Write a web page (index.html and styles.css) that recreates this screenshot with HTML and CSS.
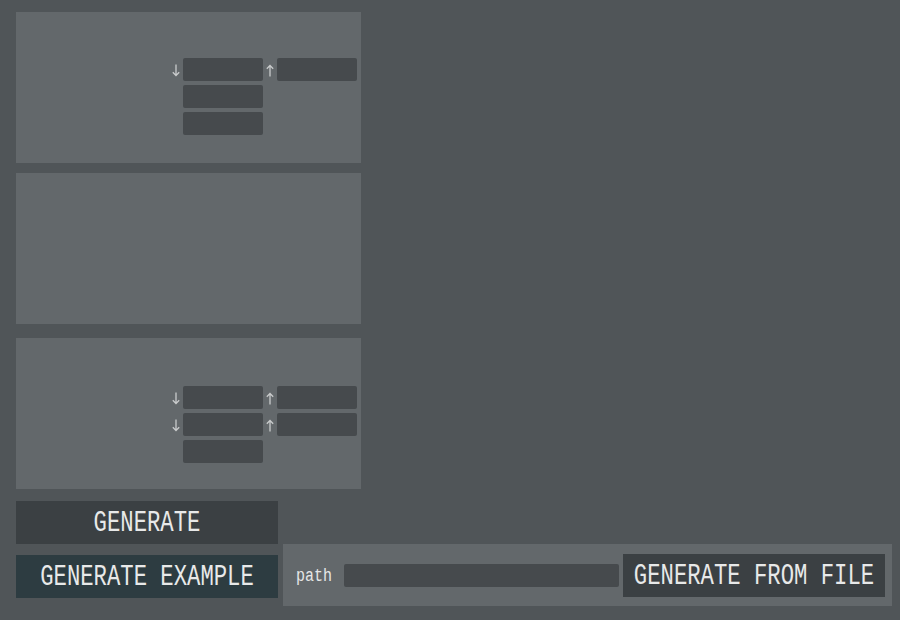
FILE: index.html
```html
<!DOCTYPE html>
<html>
<head>
<meta charset="utf-8">
<link rel="stylesheet" href="styles.css">
</head>
<body>
<div class="app">
  <section class="panel panel-a">
    <div class="grid">
      <span class="arrow"><svg width="8" height="13" viewBox="0 0 8 13"><path d="M4 0.5V11.5M0.8 8.3L4 11.5L7.2 8.3" fill="none" stroke="#c9cbcc" stroke-width="1.3"/></svg></span>
      <div class="field"></div>
      <span class="arrow up"><svg width="8" height="13" viewBox="0 0 8 13"><path d="M4 12.5V1.5M0.8 4.7L4 1.5L7.2 4.7" fill="none" stroke="#c9cbcc" stroke-width="1.3"/></svg></span>
      <div class="field"></div>
      <span></span><div class="field"></div><span></span><span></span>
      <span></span><div class="field"></div><span></span><span></span>
    </div>
  </section>
  <section class="panel panel-b"></section>
  <section class="panel panel-c">
    <div class="grid">
      <span class="arrow"><svg width="8" height="13" viewBox="0 0 8 13"><path d="M4 0.5V11.5M0.8 8.3L4 11.5L7.2 8.3" fill="none" stroke="#c9cbcc" stroke-width="1.3"/></svg></span>
      <div class="field"></div>
      <span class="arrow up"><svg width="8" height="13" viewBox="0 0 8 13"><path d="M4 12.5V1.5M0.8 4.7L4 1.5L7.2 4.7" fill="none" stroke="#c9cbcc" stroke-width="1.3"/></svg></span>
      <div class="field"></div>
      <span class="arrow"><svg width="8" height="13" viewBox="0 0 8 13"><path d="M4 0.5V11.5M0.8 8.3L4 11.5L7.2 8.3" fill="none" stroke="#c9cbcc" stroke-width="1.3"/></svg></span>
      <div class="field"></div>
      <span class="arrow up"><svg width="8" height="13" viewBox="0 0 8 13"><path d="M4 12.5V1.5M0.8 4.7L4 1.5L7.2 4.7" fill="none" stroke="#c9cbcc" stroke-width="1.3"/></svg></span>
      <div class="field"></div>
      <span></span><div class="field"></div><span></span><span></span>
    </div>
  </section>
  <button class="btn btn-generate"><span class="lbl">GENERATE</span></button>
  <div class="row">
    <button class="btn btn-example"><span class="lbl">GENERATE EXAMPLE</span></button>
    <div class="file-panel">
      <span class="path-label">path</span>
      <div class="path-field"></div>
      <button class="btn btn-file"><span class="lbl">GENERATE FROM FILE</span></button>
    </div>
  </div>
</div>
</body>
</html>
```
FILE: styles.css
```css
html, body {
  margin: 0;
  padding: 0;
  background: #505558;
  width: 900px;
  height: 620px;
  overflow: hidden;
}
.app {
  padding: 12px 0 0 16px;
  display: flex;
  flex-direction: column;
  align-items: flex-start;
}
.panel {
  width: 345px;
  height: 151px;
  background: #63686b;
  box-sizing: border-box;
  display: flex;
  justify-content: flex-end;
  padding-right: 4px;
}
.panel-a { padding-top: 46px; }
.panel-b { margin-top: 10px; }
.panel-c { margin-top: 14px; padding-top: 48px; }
.grid {
  display: grid;
  grid-template-columns: 11px 80px 14px 80px;
  grid-auto-rows: 23px;
  row-gap: 4px;
  align-content: start;
}
.field {
  background: #464a4d;
  border-radius: 2px;
}
.arrow {
  display: flex;
  align-items: center;
  justify-content: flex-start;
  height: 23px;
  padding-top: 1px;
  box-sizing: border-box;
}
.arrow.up { padding-left: 3px; }
.arrow svg { display: block; }
.btn {
  border: 0;
  margin: 0;
  padding: 0;
  height: 43px;
  color: #e8e9e9;
  font-family: "Liberation Mono", monospace;
  font-size: 22.25px;
  display: flex;
  align-items: center;
  justify-content: center;
  white-space: pre;
}
.lbl {
  display: inline-block;
  transform: translateY(1.5px) scaleY(1.32);
  line-height: 1;
}
.btn-generate {
  width: 262px;
  margin-top: 12px;
  background: #3b4043;
}
.row {
  display: flex;
  align-items: flex-start;
  gap: 5px;
}
.btn-example {
  width: 262px;
  margin-top: 11px;
  background: #2d3c41;
}
.file-panel {
  width: 609px;
  height: 62px;
  background: #63686b;
  box-sizing: border-box;
  display: flex;
  align-items: center;
  padding: 0 7px 0 13px;
}
.path-label {
  font-family: "Liberation Mono", monospace;
  font-size: 15px;
  line-height: 1;
  color: #e6e7e7;
  margin-right: 12px;
  transform: translateY(1px) scaleY(1.25);
}
.path-field {
  flex: 1;
  height: 23px;
  background: #464a4d;
  border-radius: 2px;
  margin-right: 4px;
}
.btn-file {
  width: 262px;
  background: #3b4043;
  align-self: flex-start;
  margin-top: 10px;
}
```
